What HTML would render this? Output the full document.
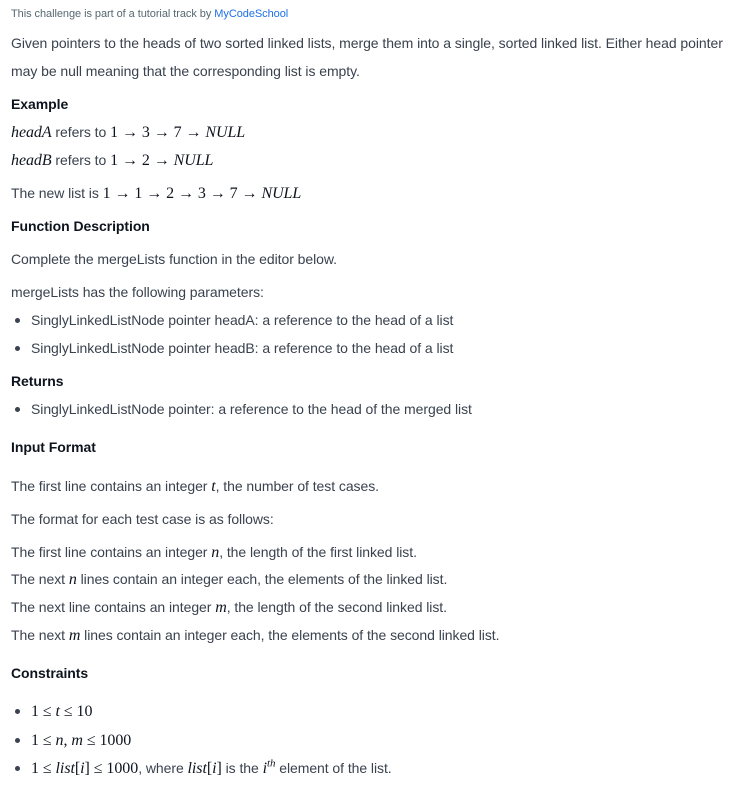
<!DOCTYPE html>
<html><head><meta charset="utf-8"><style>
body{margin:0;background:#fff;width:747px;height:786px;position:relative;font-family:"Liberation Sans",sans-serif;color:#39424e;font-size:14px;overflow:hidden;letter-spacing:-0.06px}
.l{position:absolute;left:11px;line-height:18px;white-space:nowrap}
.b{font-weight:bold;color:#0e141e}
.m{font-family:"Liberation Serif",serif;font-size:16px;color:#0e141e}
.mi{font-family:"Liberation Serif",serif;font-style:italic;font-size:16px;color:#0e141e}
.li{left:31px}
.dot{position:absolute;left:15px;width:5px;height:5px;border-radius:50%;background:#39424e}
a{color:#1f6fe5;text-decoration:none}
sup{line-height:0;font-size:11px}
</style></head><body>
<div class="l" style="top:5px;font-size:11px;color:#576871">This challenge is part of a tutorial track by <a>MyCodeSchool</a></div>
<div class="l" style="top:34px">Given pointers to the heads of two sorted linked lists, merge them into a single, sorted linked list. Either head pointer</div>
<div class="l" style="top:62px">may be null meaning that the corresponding list is empty.</div>
<div class="l b" style="top:95px">Example</div>
<div class="l" style="top:123px"><span class="mi">headA</span> refers to <span class="m">1 → 3 → 7 → <i>NULL</i></span></div>
<div class="l" style="top:151px"><span class="mi">headB</span> refers to <span class="m">1 → 2 → <i>NULL</i></span></div>
<div class="l" style="top:184px">The new list is <span class="m">1 → 1 → 2 → 3 → 7 → <i>NULL</i></span></div>
<div class="l b" style="top:217px">Function Description</div>
<div class="l" style="top:250px">Complete the mergeLists function in the editor below.</div>
<div class="l" style="top:283px">mergeLists has the following parameters:</div>
<div class="dot" style="top:318px"></div><div class="l li" style="top:311px">SinglyLinkedListNode pointer headA: a reference to the head of a list</div>
<div class="dot" style="top:346px"></div><div class="l li" style="top:339px">SinglyLinkedListNode pointer headB: a reference to the head of a list</div>
<div class="l b" style="top:372px">Returns</div>
<div class="dot" style="top:407px"></div><div class="l li" style="top:400px">SinglyLinkedListNode pointer: a reference to the head of the merged list</div>
<div class="l b" style="top:438px">Input Format</div>
<div class="l" style="top:477px">The first line contains an integer <span class="mi">t</span>, the number of test cases.</div>
<div class="l" style="top:510px">The format for each test case is as follows:</div>
<div class="l" style="top:543px">The first line contains an integer <span class="mi">n</span>, the length of the first linked list.</div>
<div class="l" style="top:570px">The next <span class="mi">n</span> lines contain an integer each, the elements of the linked list.</div>
<div class="l" style="top:598px">The next line contains an integer <span class="mi">m</span>, the length of the second linked list.</div>
<div class="l" style="top:626px">The next <span class="mi">m</span> lines contain an integer each, the elements of the second linked list.</div>
<div class="l b" style="top:664px">Constraints</div>
<div class="dot" style="top:709px"></div><div class="l li" style="top:702px"><span class="m">1 ≤ <i>t</i> ≤ 10</span></div>
<div class="dot" style="top:738px"></div><div class="l li" style="top:731px"><span class="m">1 ≤ <i>n</i>, <i>m</i> ≤ 1000</span></div>
<div class="dot" style="top:766px"></div><div class="l li" style="top:759px"><span class="m">1 ≤ <i>list</i>[<i>i</i>] ≤ 1000</span>, where <span class="m"><i>list</i>[<i>i</i>]</span> is the <span class="mi">i<sup>th</sup></span> element of the list.</div>
</body></html>
